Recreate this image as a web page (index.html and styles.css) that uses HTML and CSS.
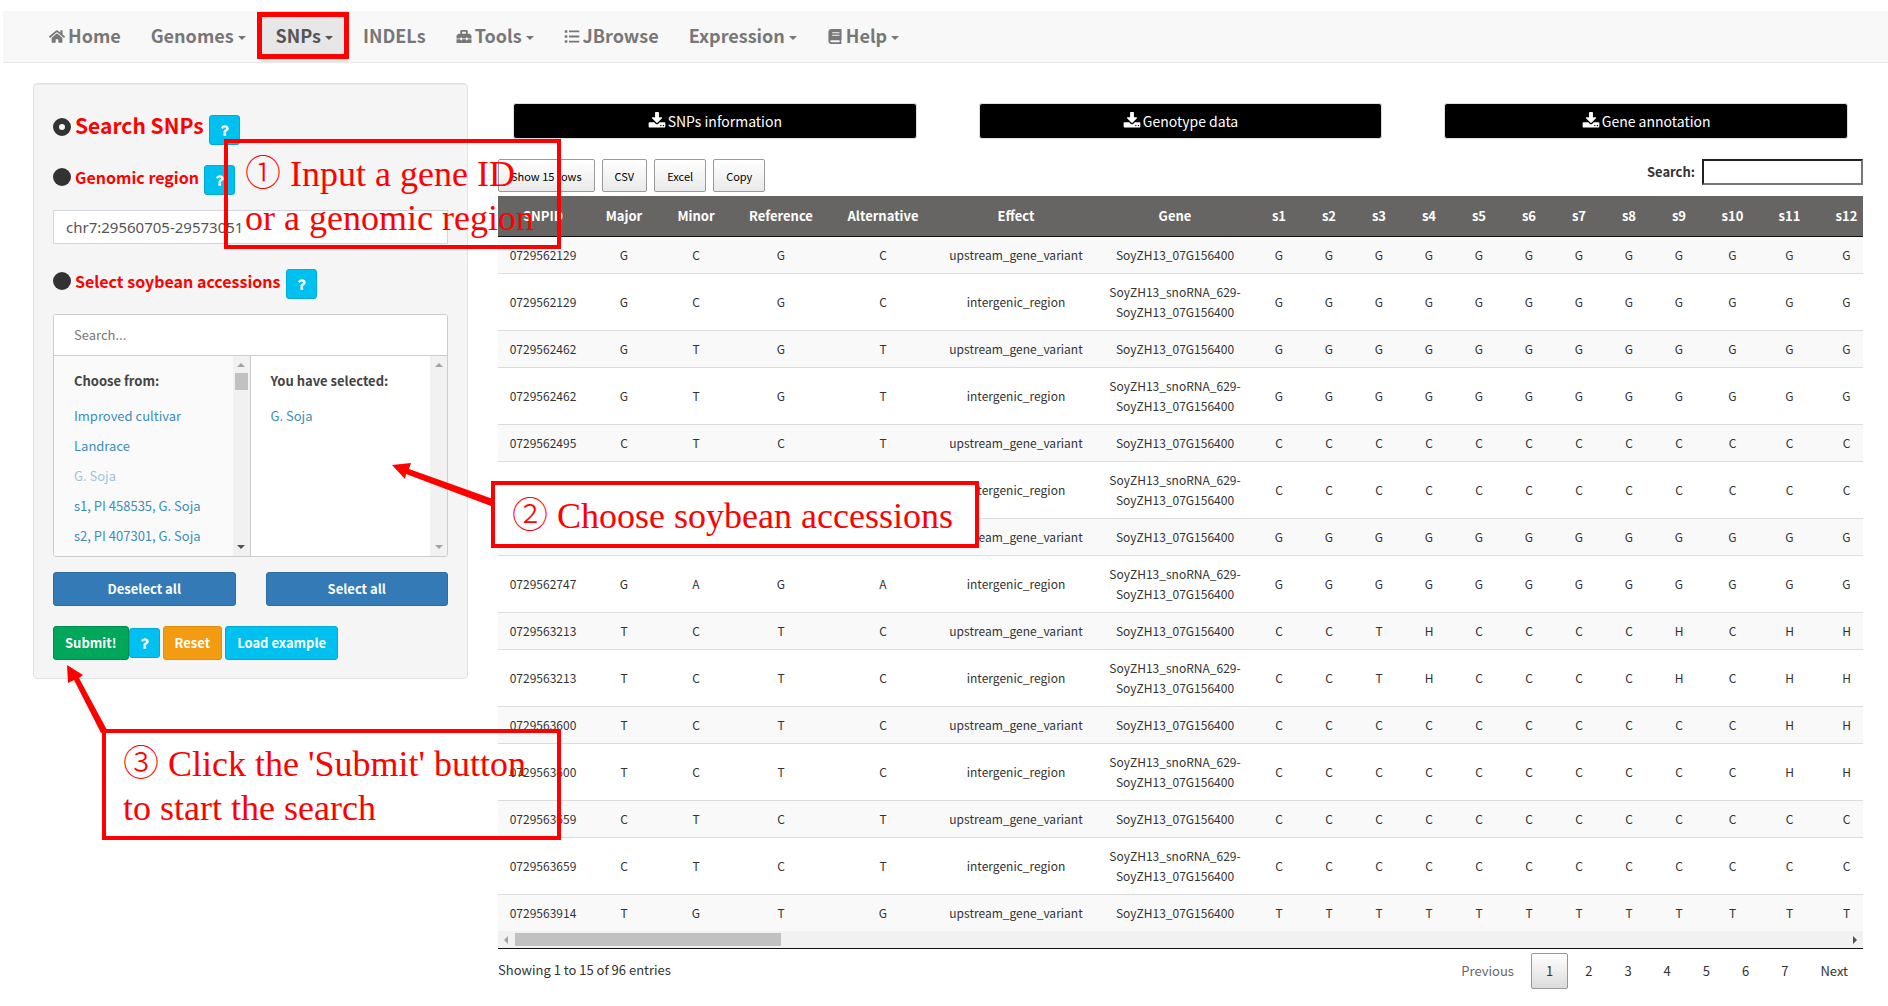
FILE: index.html
```html
<!DOCTYPE html>
<html lang="en">
<head>
<meta charset="utf-8">
<title>SNPs</title>
<link rel="stylesheet" href="styles.css">
</head>
<body>
<svg class="sprite" aria-hidden="true">
  <symbol id="i-home" viewBox="0 0 576 512"><path d="M280.37 148.26L96 300.11V464a16 16 0 0 0 16 16l112.06-.29a16 16 0 0 0 15.92-16V368a16 16 0 0 1 16-16h64a16 16 0 0 1 16 16v95.64a16 16 0 0 0 16 16.05L464 480a16 16 0 0 0 16-16V300L295.67 148.26a12.19 12.19 0 0 0-15.3 0zM571.6 251.47L488 182.56V44.05a12 12 0 0 0-12-12h-56a12 12 0 0 0-12 12v72.61L318.47 43a48 48 0 0 0-61 0L4.34 251.47a12 12 0 0 0-1.6 16.9l25.5 31A12 12 0 0 0 45.15 301l235.22-193.74a12.19 12.19 0 0 1 15.3 0L530.9 301a12 12 0 0 0 16.9-1.6l25.5-31a12 12 0 0 0-1.7-16.93z"/></symbol>
  <symbol id="i-tools" viewBox="0 0 512 512"><path d="M502.63 214.63l-45.25-45.25c-6-6-14.14-9.37-22.63-9.37H384V80c0-26.51-21.49-48-48-48H176c-26.51 0-48 21.49-48 48v80H77.25c-8.49 0-16.62 3.37-22.63 9.37L9.37 214.63c-6 6-9.37 14.14-9.37 22.63V320h128v-16c0-8.84 7.16-16 16-16h32c8.84 0 16 7.16 16 16v16h128v-16c0-8.84 7.16-16 16-16h32c8.84 0 16 7.16 16 16v16h128v-82.75c0-8.48-3.37-16.62-9.37-22.62zM320 160H192V96h128v64zm64 208c0 8.84-7.16 16-16 16h-32c-8.84 0-16-7.16-16-16v-16H192v16c0 8.84-7.16 16-16 16h-32c-8.84 0-16-7.16-16-16v-16H0v96c0 17.67 14.33 32 32 32h448c17.67 0 32-14.33 32-32v-96H384v16z"/></symbol>
  <symbol id="i-list" viewBox="0 0 512 512"><path d="M8 40h88v88H8zM8 212h88v88H8zM8 384h88v88H8zM152 54h352v60H152zM152 226h352v60H152zM152 398h352v60H152z"/></symbol>
  <symbol id="i-book" viewBox="0 0 448 512"><path fill-rule="evenodd" d="M448 360V24c0-13.3-10.700-24-24-24H96C43 0 0 43 0 96v320c0 53 43 96 96 96h328c13.300 0 24-10.700 24-24v-16c0-7.500-3.500-14.300-8.900-18.700-4.200-15.400-4.200-59.300 0-74.700 5.400-4.300 8.900-11.100 8.900-18.600zM128 134v-20h250v34H128zm0 64h250v34H128zM381.400 448H96c-17.700 0-32-14.300-32-32s14.300-32 32-32h285.400c-1.900 17.100-1.900 46.900 0 64z"/></symbol>
  <symbol id="i-download" viewBox="0 0 1792 1792"><path d="M1344 1344q0-26-19-45t-45-19-45 19-19 45 19 45 45 19 45-19 19-45zm256 0q0-26-19-45t-45-19-45 19-19 45 19 45 45 19 45-19 19-45zm128-224v320q0 40-28 68t-68 28h-1472q-40 0-68-28t-28-68v-320q0-40 28-68t68-28h465l135 136q58 56 136 56t136-56l136-136h464q40 0 68 28t28 68zm-325-569q17 41-14 70l-448 448q-18 19-45 19t-45-19l-448-448q-31-29-14-70 17-39 59-39h256v-448q0-26 19-45t45-19h256q26 0 45 19t19 45v448h256q42 0 59 39z"/></symbol>
  <symbol id="i-question" viewBox="0 0 1792 1792"><path d="M1088 1256v240q0 16-12 28t-28 12h-240q-16 0-28-12t-12-28v-240q0-16 12-28t28-12h240q16 0 28 12t12 28zm316-600q0 54-15.500 101t-35 76.500-55 59.500-57.500 43.500-61 35.500q-41 23-68.500 65t-27.500 67q0 17-12 32.500t-28 15.500h-240q-15 0-25.500-18.500t-10.500-37.500v-45q0-83 65-156.500t143-108.500q59-27 84-56t25-76q0-42-46.500-74t-107.500-32q-65 0-108 29-35 25-107 115-13 16-31 16-12 0-25-8l-164-125q-13-10-15.500-25t5.500-28q160-266 464-266 80 0 161 31t146 83 106 127.500 41 158.500z"/></symbol>
  <symbol id="i-dot" viewBox="0 0 18 18"><circle cx="9" cy="9" r="9"/></symbol>
  <symbol id="i-ring" viewBox="0 0 18 18"><circle cx="9" cy="9" r="6" fill="none" stroke="currentColor" stroke-width="6"/></symbol>
</svg>

<nav class="navbar">
  <a class="nav-link" href="#"><svg class="nav-icon"><use href="#i-home"/></svg>Home</a>
  <a class="nav-link" href="#">Genomes<span class="caret"></span></a>
  <a class="nav-link active" href="#">SNPs<span class="caret"></span></a>
  <a class="nav-link" href="#">INDELs</a>
  <a class="nav-link" href="#"><svg class="nav-icon"><use href="#i-tools"/></svg>Tools<span class="caret"></span></a>
  <a class="nav-link" href="#"><svg class="nav-icon"><use href="#i-list"/></svg>JBrowse</a>
  <a class="nav-link" href="#">Expression<span class="caret"></span></a>
  <a class="nav-link" href="#"><svg class="nav-icon"><use href="#i-book"/></svg>Help<span class="caret"></span></a>
</nav>

<main class="layout">
  <form class="well">
    <div class="field-head title">
      <svg class="bullet"><use href="#i-ring"/></svg><h1>Search SNPs</h1>
      <button type="button" class="btn info help" aria-label="Help: search SNPs"><svg class="q"><use href="#i-question"/></svg></button>
    </div>
    <div class="field-head">
      <svg class="bullet"><use href="#i-dot"/></svg><label for="region">Genomic region</label>
      <button type="button" class="btn info help" aria-label="Help: genomic region"><svg class="q"><use href="#i-question"/></svg></button>
    </div>
    <input class="region" id="region" type="text" value="chr7:29560705-29573051">
    <div class="field-head accessions">
      <svg class="bullet"><use href="#i-dot"/></svg><label for="acc">Select soybean accessions</label>
      <button type="button" class="btn info help" aria-label="Help: accessions"><svg class="q"><use href="#i-question"/></svg></button>
    </div>
    <div class="multi">
      <input class="multi-search" id="acc" type="text" placeholder="Search...">
      <div class="multi-body">
        <div class="pane from">
          <div class="pane-list">
            <strong>Choose from:</strong>
            <a href="#">Improved cultivar</a>
            <a href="#">Landrace</a>
            <a href="#" class="used">G. Soja</a>
            <a href="#">s1, PI 458535, G. Soja</a>
            <a href="#">s2, PI 407301, G. Soja</a>
          </div>
          <div class="vbar"><span class="arrow up off"></span><span class="vthumb"></span><span class="arrow down"></span></div>
        </div>
        <div class="pane">
          <div class="pane-list">
            <strong>You have selected:</strong>
            <a href="#">G. Soja</a>
          </div>
          <div class="vbar"><span class="arrow up off"></span><span class="arrow down off"></span></div>
        </div>
      </div>
    </div>
    <div class="pair">
      <button type="button" class="btn primary">Deselect all</button>
      <button type="button" class="btn primary">Select all</button>
    </div>
    <div class="actions">
      <div class="submit-group">
        <button type="button" class="btn success">Submit!</button>
        <button type="button" class="btn info help" aria-label="Help: submit"><svg class="q"><use href="#i-question"/></svg></button>
      </div>
      <button type="button" class="btn warning">Reset</button>
      <button type="button" class="btn info">Load example</button>
    </div>
  </form>

  <section class="results">
    <div class="downloads">
      <button type="button" class="download"><svg><use href="#i-download"/></svg>SNPs information</button>
      <button type="button" class="download"><svg><use href="#i-download"/></svg>Genotype data</button>
      <button type="button" class="download"><svg><use href="#i-download"/></svg>Gene annotation</button>
    </div>
    <div class="toolbar">
      <button type="button" class="dt-btn">Show 15 rows</button>
      <button type="button" class="dt-btn">CSV</button>
      <button type="button" class="dt-btn">Excel</button>
      <button type="button" class="dt-btn">Copy</button>
      <label class="filter">Search:<input type="search"></label>
    </div>
    <div class="scroll">
      <table>
        <colgroup><col class="c-id"><col class="c-al" span="2"><col class="c-ref"><col class="c-alt"><col class="c-eff"><col class="c-gene"><col class="c-s" span="9"><col class="c-sw" span="3"></colgroup>
        <thead>
          <tr><th>SNPID<th>Major<th>Minor<th>Reference<th>Alternative<th>Effect<th>Gene<th>s1<th>s2<th>s3<th>s4<th>s5<th>s6<th>s7<th>s8<th>s9<th>s10<th>s11<th>s12</tr>
        </thead>
        <tbody>
          <tr><td>0729562129<td>G<td>C<td>G<td>C<td>upstream_gene_variant<td>SoyZH13_07G156400<td>G<td>G<td>G<td>G<td>G<td>G<td>G<td>G<td>G<td>G<td>G<td>G</tr>
          <tr><td>0729562129<td>G<td>C<td>G<td>C<td>intergenic_region<td>SoyZH13_snoRNA_629-<br>SoyZH13_07G156400<td>G<td>G<td>G<td>G<td>G<td>G<td>G<td>G<td>G<td>G<td>G<td>G</tr>
          <tr><td>0729562462<td>G<td>T<td>G<td>T<td>upstream_gene_variant<td>SoyZH13_07G156400<td>G<td>G<td>G<td>G<td>G<td>G<td>G<td>G<td>G<td>G<td>G<td>G</tr>
          <tr><td>0729562462<td>G<td>T<td>G<td>T<td>intergenic_region<td>SoyZH13_snoRNA_629-<br>SoyZH13_07G156400<td>G<td>G<td>G<td>G<td>G<td>G<td>G<td>G<td>G<td>G<td>G<td>G</tr>
          <tr><td>0729562495<td>C<td>T<td>C<td>T<td>upstream_gene_variant<td>SoyZH13_07G156400<td>C<td>C<td>C<td>C<td>C<td>C<td>C<td>C<td>C<td>C<td>C<td>C</tr>
          <tr><td>0729562495<td>C<td>T<td>C<td>T<td>intergenic_region<td>SoyZH13_snoRNA_629-<br>SoyZH13_07G156400<td>C<td>C<td>C<td>C<td>C<td>C<td>C<td>C<td>C<td>C<td>C<td>C</tr>
          <tr><td>0729562747<td>G<td>A<td>G<td>A<td>upstream_gene_variant<td>SoyZH13_07G156400<td>G<td>G<td>G<td>G<td>G<td>G<td>G<td>G<td>G<td>G<td>G<td>G</tr>
          <tr><td>0729562747<td>G<td>A<td>G<td>A<td>intergenic_region<td>SoyZH13_snoRNA_629-<br>SoyZH13_07G156400<td>G<td>G<td>G<td>G<td>G<td>G<td>G<td>G<td>G<td>G<td>G<td>G</tr>
          <tr><td>0729563213<td>T<td>C<td>T<td>C<td>upstream_gene_variant<td>SoyZH13_07G156400<td>C<td>C<td>T<td>H<td>C<td>C<td>C<td>C<td>H<td>C<td>H<td>H</tr>
          <tr><td>0729563213<td>T<td>C<td>T<td>C<td>intergenic_region<td>SoyZH13_snoRNA_629-<br>SoyZH13_07G156400<td>C<td>C<td>T<td>H<td>C<td>C<td>C<td>C<td>H<td>C<td>H<td>H</tr>
          <tr><td>0729563600<td>T<td>C<td>T<td>C<td>upstream_gene_variant<td>SoyZH13_07G156400<td>C<td>C<td>C<td>C<td>C<td>C<td>C<td>C<td>C<td>C<td>H<td>H</tr>
          <tr><td>0729563600<td>T<td>C<td>T<td>C<td>intergenic_region<td>SoyZH13_snoRNA_629-<br>SoyZH13_07G156400<td>C<td>C<td>C<td>C<td>C<td>C<td>C<td>C<td>C<td>C<td>H<td>H</tr>
          <tr><td>0729563659<td>C<td>T<td>C<td>T<td>upstream_gene_variant<td>SoyZH13_07G156400<td>C<td>C<td>C<td>C<td>C<td>C<td>C<td>C<td>C<td>C<td>C<td>C</tr>
          <tr><td>0729563659<td>C<td>T<td>C<td>T<td>intergenic_region<td>SoyZH13_snoRNA_629-<br>SoyZH13_07G156400<td>C<td>C<td>C<td>C<td>C<td>C<td>C<td>C<td>C<td>C<td>C<td>C</tr>
          <tr><td>0729563914<td>T<td>G<td>T<td>G<td>upstream_gene_variant<td>SoyZH13_07G156400<td>T<td>T<td>T<td>T<td>T<td>T<td>T<td>T<td>T<td>T<td>T<td>T</tr>
        </tbody>
      </table>
    </div>
    <div class="hbar"><span class="arrow left off"></span><span class="htrack"><span class="hthumb"></span></span><span class="arrow right"></span></div>
    <div class="foot">
      <div class="showing">Showing 1 to 15 of 96 entries</div>
      <div class="pages">
        <button type="button" class="page prev" disabled>Previous</button>
        <button type="button" class="page current">1</button>
        <button type="button" class="page">2</button>
        <button type="button" class="page">3</button>
        <button type="button" class="page">4</button>
        <button type="button" class="page">5</button>
        <button type="button" class="page">6</button>
        <button type="button" class="page">7</button>
        <button type="button" class="page">Next</button>
      </div>
    </div>
  </section>
</main>

<div class="mark mark-nav"></div>
<svg class="mark-arrows" aria-hidden="true">
  <path d="M392 465L411 463L409 469L493 499L491 506L406 474L405 479Z"/>
  <path d="M67 665L83 675L79 678L107 730L101 733L74 680L68 683Z"/>
</svg>
<div class="mark note note-1"><span class="num">①</span> Input a gene ID<br>or a genomic region</div>
<div class="mark note note-2"><span class="num">②</span> Choose soybean accessions</div>
<div class="mark note note-3"><span class="num">③</span> Click the 'Submit' button<br>to start the search</div>
</body>
</html>
```
FILE: styles.css
```css
* { box-sizing: border-box; }
body {
  position: relative;
  margin: 0;
  padding: 11px 0 0 3px;
  background: #fff;
  color: #333;
  font: 13px/20px "Noto Sans CJK SC", "Noto Sans", sans-serif;
}
button, input { font: inherit; color: inherit; margin: 0; }
a { text-decoration: none; color: #337ab7; }
svg { fill: currentColor; flex: none; }
.sprite { position: absolute; width: 0; height: 0; }

/* Navigation */
.navbar {
  display: flex;
  height: 52px;
  padding-left: 31px;
  background: #f8f8f8;
  border-bottom: 1px solid #e7e7e7;
}
.nav-link {
  display: flex;
  align-items: center;
  padding: 0 15px 4px;
  color: #777;
  font-size: 18px;
  font-weight: bold;
}
.nav-link.active { background: #e7e7e7; color: #555; }
.nav-icon { width: 16px; height: 15px; margin: 4px 3px 0 0; }
.caret {
  margin: 7px 0 0 4px;
  border: 4px solid transparent;
  border-top-color: currentColor;
  border-bottom: 0;
}

/* Page columns */
.layout {
  display: grid;
  grid-template-columns: minmax(0, 29fr) minmax(0, 91fr);
  gap: 30px;
  align-items: start;
  padding: 20px 25px 0 30px;
}

/* Search form */
.well {
  display: flex;
  flex-direction: column;
  padding: 31px 19px 18px;
  background: #f5f5f5;
  border: 1px solid #e3e3e3;
  border-radius: 4px;
  box-shadow: inset 0 1px 1px rgba(0, 0, 0, .05);
}
.field-head { display: flex; align-items: center; height: 30px; margin-bottom: 15px; }
.title { margin-bottom: 20px; }
.accessions { margin: 25px 0 15px; }
.field-head h1, .field-head label { margin: 0 5px 6px 4px; color: red; font-weight: bold; font-size: 16px; line-height: 24px; }
.field-head h1 { font-size: 21px; margin-bottom: 10px; }
.bullet { width: 18px; height: 18px; margin-bottom: 6px; }
.btn {
  height: 34px;
  padding: 0 11px;
  border: 1px solid;
  border-radius: 3px;
  color: #fff;
  font-weight: bold;
}
.info { background: #00c0ef; border-color: #00acd6; }
.primary { background: #337ab7; border-color: #2e6da4; }
.success { background: #00a65a; border-color: #008d4c; }
.warning { background: #f39c12; border-color: #e08e0b; }
.help { display: flex; align-items: center; justify-content: center; width: 31px; height: 30px; padding: 0; }
.q { width: 15px; height: 15px; }
.region {
  width: 100%;
  height: 34px;
  padding: 0 12px;
  border: 1px solid #d2d6de;
  background: #fff;
  color: #555;
  font-family: "Noto Sans", sans-serif;
  font-size: 15px;
}
.multi { border: 1px solid #ccc; border-radius: 3px; background: #fff; overflow: hidden; }
.multi-search {
  display: block;
  width: 100%;
  height: 41px;
  padding: 0 20px 2px;
  border: 0;
  border-bottom: 1px solid #ccc;
  background: #fff;
}
.multi-search::placeholder { color: #777; opacity: 1; }
.multi-body { display: grid; grid-template-columns: 1fr 1fr; height: 200px; }
.pane { display: flex; min-width: 0; }
.from { background: #fafafa; border-right: 1px solid #ccc; }
.pane-list { flex: 1; display: flex; flex-direction: column; padding: 10px 0 0 20px; overflow: hidden; white-space: nowrap; }
.pane-list strong { line-height: 30px; margin-bottom: 5px; color: #444; }
.pane-list a { line-height: 30px; color: #3c8dbc; }
.pane-list .used { opacity: .5; }
.vbar { display: flex; flex-direction: column; align-items: center; width: 17px; padding: 7px 0; background: #f1f1f1; }
.vthumb { width: 13px; height: 17px; margin-top: 6px; background: #c1c1c1; }
.arrow { width: 0; height: 0; border: 4px solid transparent; color: #505050; }
.arrow.off { color: #a3a3a3; }
.up { border-top: 0; border-bottom-color: currentColor; }
.down { border-bottom: 0; border-top-color: currentColor; margin-top: auto; }
.left { border-left: 0; border-right-color: currentColor; }
.right { border-right: 0; border-left-color: currentColor; }
.pair { display: grid; grid-template-columns: 1fr 1fr; gap: 30px; margin: 15px 0 20px; }
.actions { display: flex; align-items: center; gap: 3px; }
.submit-group { display: flex; align-items: center; }

/* Results */
.downloads { display: grid; grid-template-columns: repeat(3, 1fr); gap: 62px; padding: 20px 15px 0; }
.download {
  display: flex;
  align-items: center;
  justify-content: center;
  gap: 2px;
  height: 36px;
  border: 1px solid #ddd;
  border-radius: 3px;
  background: #000;
  color: #fff;
  font-size: 14px;
}
.download svg { width: 18px; height: 18px; }
.toolbar { display: flex; align-items: flex-start; gap: 7px; height: 57px; padding-top: 20px; }
.dt-btn {
  height: 33px;
  padding: 0 12px;
  border: 1px solid #999;
  border-radius: 2px;
  background: linear-gradient(#fff, #e9e9e9);
  color: #000;
  font-size: 11px;
}
.filter { display: flex; align-items: center; gap: 7px; margin-left: auto; font-weight: bold; }
.filter input { width: 161px; height: 26px; border: 2px inset #767676; border-radius: 0; background: #fff; appearance: none; }
.scroll { overflow: hidden; }
table { width: 1377px; table-layout: fixed; border-collapse: separate; border-spacing: 0; text-align: center; }
.c-id { width: 90px; }
.c-al { width: 72px; }
.c-ref { width: 98px; }
.c-alt { width: 106px; }
.c-eff { width: 160px; }
.c-gene { width: 158px; }
.c-s { width: 50px; }
.c-sw { width: 57px; }
th { height: 41px; padding: 0; background: #666563; color: #fff; border-bottom: 1px solid #111; }
td { padding: 8px 0; border-top: 1px solid #ddd; font-size: 12px; white-space: nowrap; }
tbody tr:first-child td { border-top: 0; }
tbody tr:nth-child(odd) { background: #f9f9f9; }
.hbar { display: flex; align-items: center; height: 18px; padding: 0 6px; background: #f1f1f1; border-bottom: 1px solid #111; }
.htrack { flex: 1; height: 13px; margin: 0 7px; }
.hthumb { display: block; width: 20%; height: 13px; background: #c1c1c1; }
.foot { display: flex; justify-content: space-between; padding-top: 4px; }
.showing { padding-top: 7px; }
.pages { display: flex; gap: 2px; }
.page { min-width: 37px; height: 36px; padding: 0 14px; border: 1px solid transparent; border-radius: 2px; background: none; color: #333; }
.page.current { border-color: #979797; background: linear-gradient(#fff, #dcdcdc); }
.page.prev { color: #666; }

/* Tutorial marks laid over the page */
.mark { position: absolute; border: 4px solid red; }
.mark-nav { left: 257px; top: 12px; width: 92px; height: 47px; border-width: 5px; }
.mark-arrows { position: absolute; left: 0; top: 0; width: 600px; height: 800px; fill: red; pointer-events: none; }
.note { padding: 7px 17px; color: red; font: 36px/44px "Liberation Serif", serif; white-space: nowrap; }
.num { font-family: "Noto Sans CJK SC", sans-serif; font-weight: 300; line-height: 40px; }
.note-1 { left: 224px; top: 139px; width: 337px; height: 110px; }
.note-2 { left: 491px; top: 481px; width: 488px; height: 67px; background: #fff; }
.note-3 { left: 102px; top: 729px; width: 459px; height: 111px; }
```
